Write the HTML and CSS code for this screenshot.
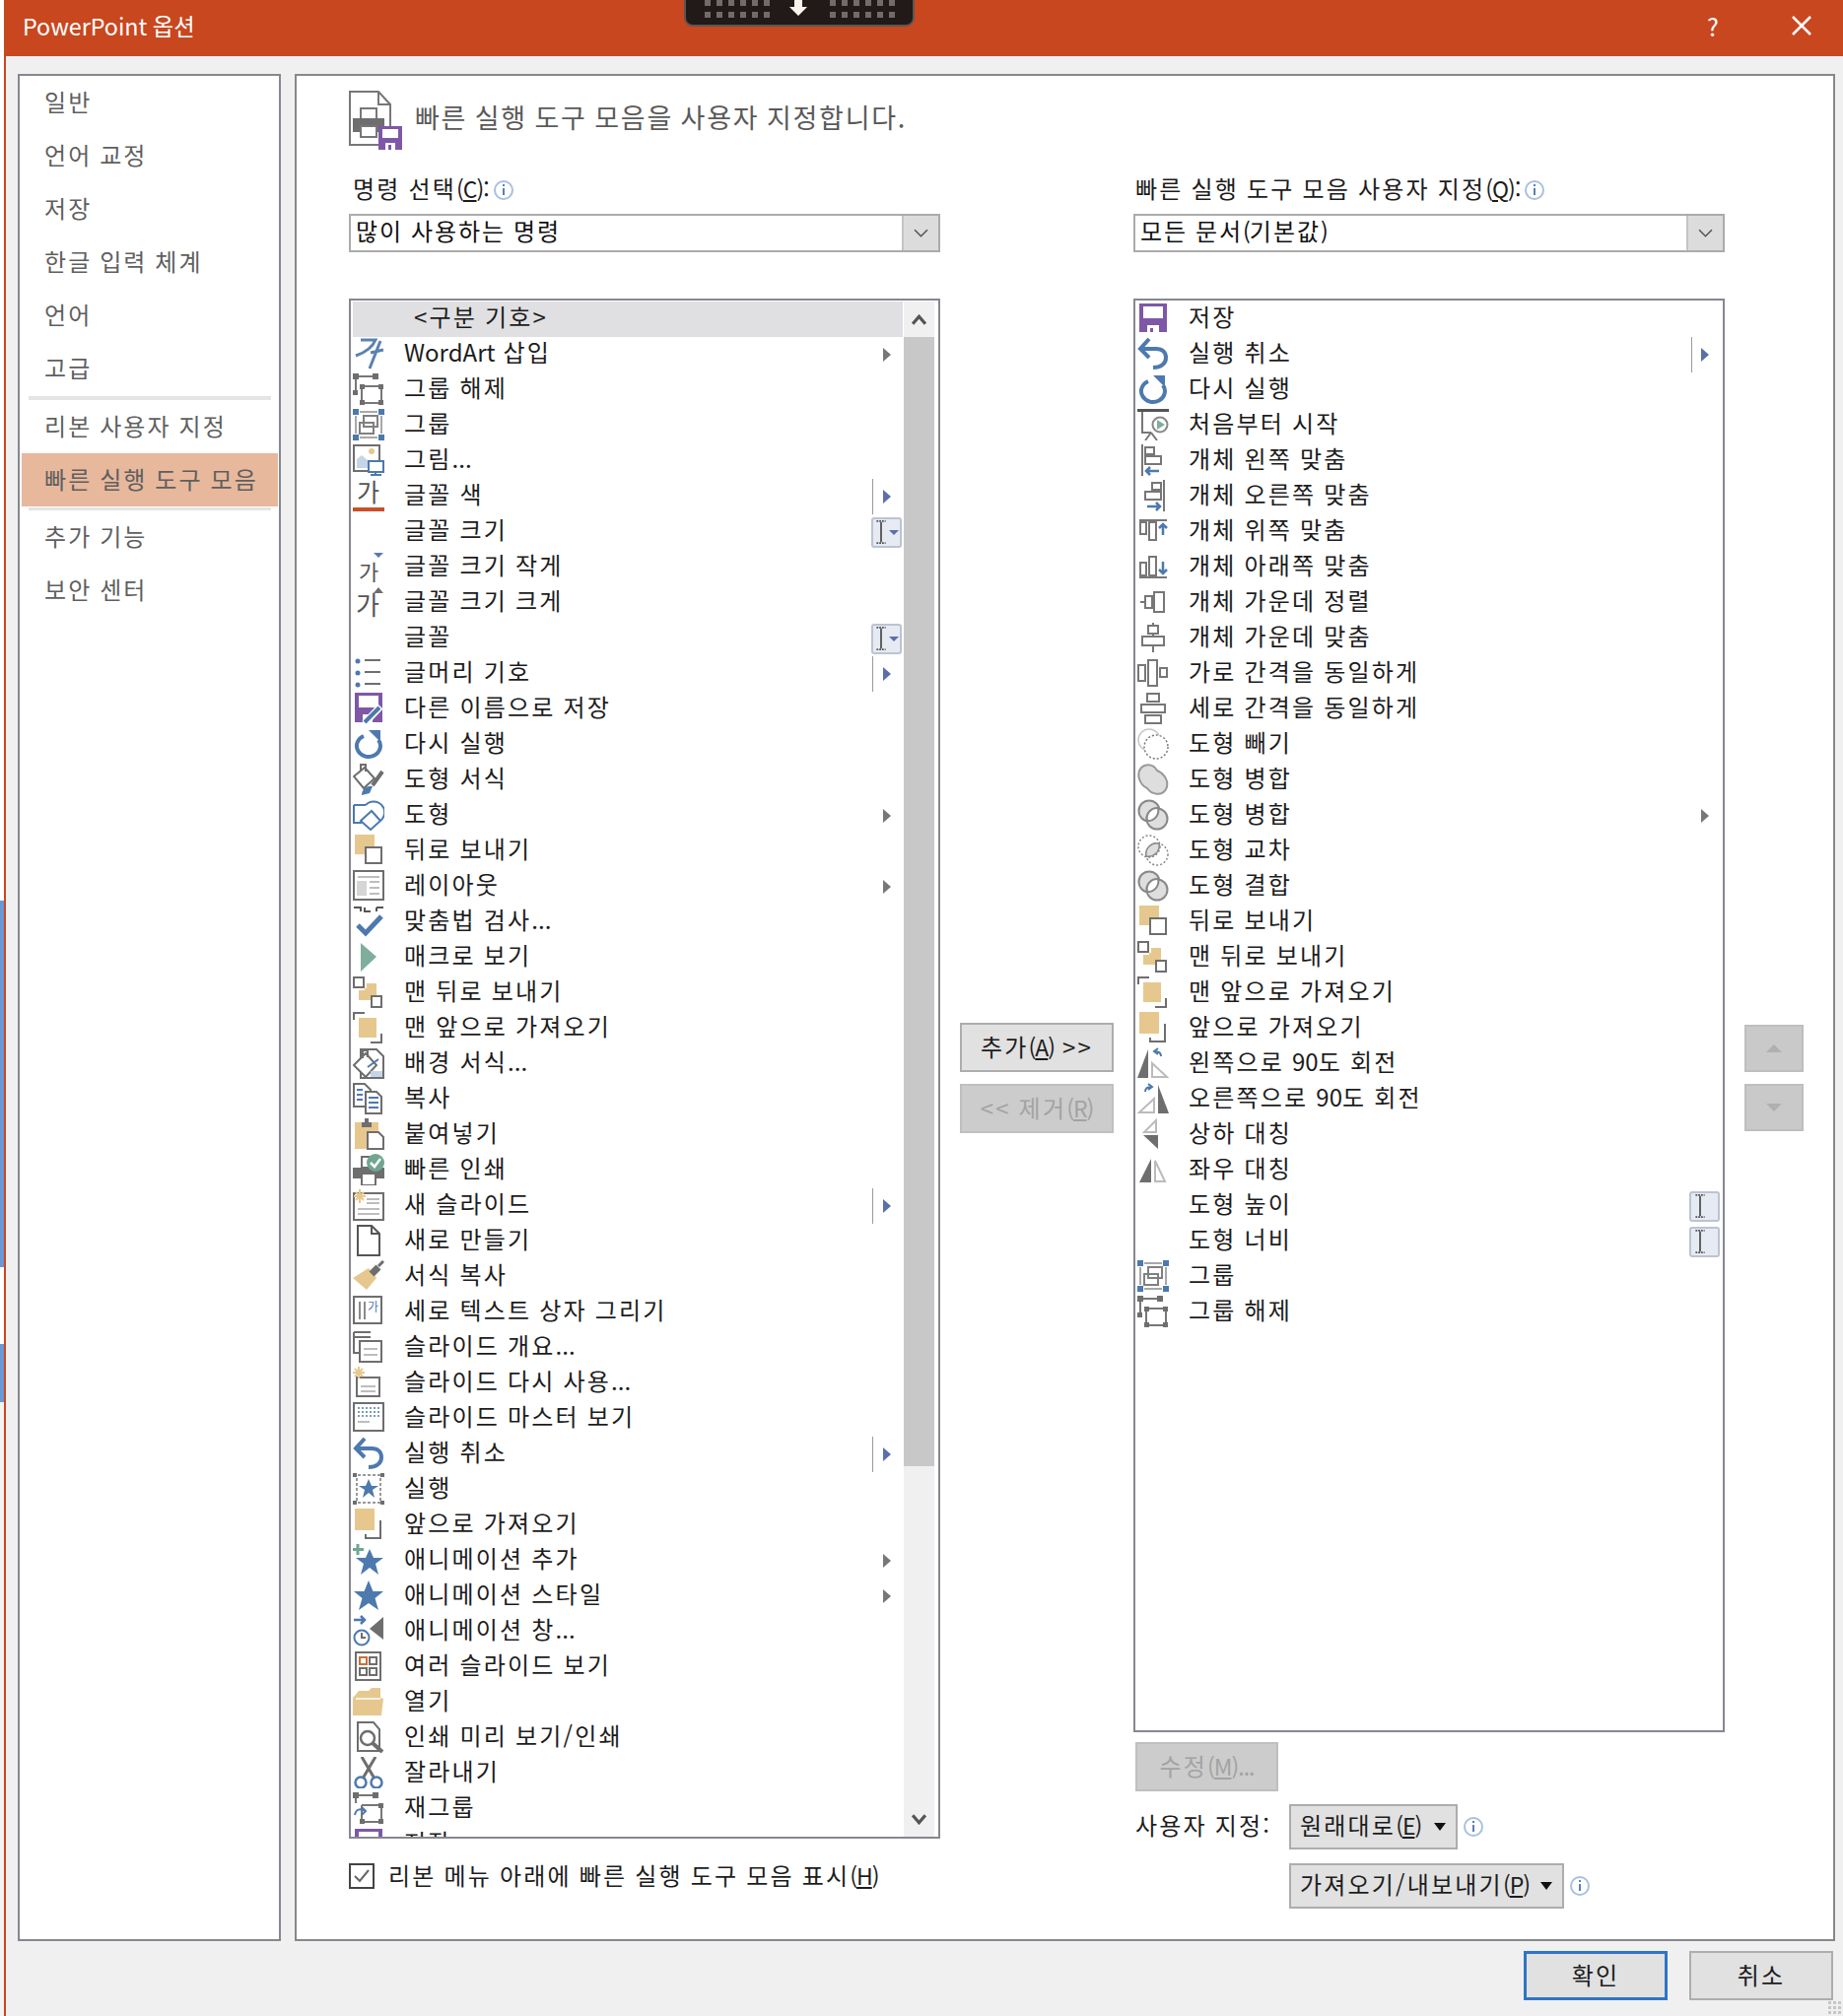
FILE: index.html
```html
<!DOCTYPE html>
<html lang="ko">
<head>
<meta charset="utf-8">
<title>PowerPoint 옵션</title>
<link rel="stylesheet" href="styles.css">
</head>
<body>
<svg class="sprite" xmlns="http://www.w3.org/2000/svg">
  <defs>
  <symbol id="save" viewBox="0 0 32 32"><path fill="#7e58a6" d="M2 1H30V30H2Z"/><path fill="#fff" d="M6 4H26V16H6ZM10 23H22V30H10Z"/><path fill="#7e58a6" d="M13 26H16V30H13Z"/></symbol>
  <symbol id="undo" viewBox="0 0 32 32"><path fill="none" stroke="#4d79ae" stroke-width="4" d="M6 11H19C26 11 29 15 29 20C29 26 24 30 16 30"/><path fill="none" stroke="#4d79ae" stroke-width="4" d="M12 1L3 11L12 20"/></symbol>
  <symbol id="redo" viewBox="0 0 32 32"><path fill="none" stroke="#4d79ae" stroke-width="4" d="M11 8A12 11 0 1 0 26 12"/><path fill="#4d79ae" d="M16 2H28V14Z"/></symbol>
  <symbol id="ungroup" viewBox="0 0 32 32"><g fill="none" stroke="#777" stroke-width="2"><path d="M3 3H23M3 3V20M9 13V30H29V13H9"/></g><g fill="#6e6e6e"><path d="M0 0H6V6H0ZM20 0H26V6H20ZM0 17H5V22H0ZM7 11H12V16H7ZM26 11H31V16H26ZM7 27H12V32H7ZM26 27H31V32H26Z"/></g></symbol>
  <symbol id="group" viewBox="0 0 32 32"><path fill="none" stroke="#a8a8a8" stroke-width="2" d="M7 3H25M7 29H25M3 7V25M29 7V25"/><g fill="none" stroke="#808080" stroke-width="2"><rect x="11" y="7" width="14" height="11"/><rect x="7" y="14" width="14" height="11"/></g><g fill="#4d79ae"><path d="M0 0H6V6H0ZM26 0H32V6H26ZM0 26H6V32H0ZM26 26H32V32H26Z"/></g></symbol>
  <symbol id="pic" viewBox="0 0 32 32"><rect x="1" y="1" width="26" height="26" fill="#fff" stroke="#6e6e6e" stroke-width="2"/><path d="M4 24V15L9 11L15 16V24Z" fill="#c5d5e8"/><circle cx="19" cy="7" r="3" fill="#e6c88e"/><rect x="16" y="17" width="15" height="11" fill="#fff" stroke="#4d79ae" stroke-width="2"/><path d="M18 31H29M23 28V31" stroke="#4d79ae" stroke-width="2"/></symbol>
  <symbol id="wordart" viewBox="0 0 32 32"><path fill="none" stroke="#5b82b0" stroke-width="3" d="M8 2H23C20 9 12 15 3 18M28 3L17 31M18 15L31 12"/></symbol>
  <symbol id="fcolor" viewBox="0 0 32 32"><text x="4" y="22" font-family="Noto Sans CJK KR" font-size="25" fill="#555">가</text><rect y="28" width="32" height="4" fill="#c8502a"/></symbol>
  <symbol id="fsmall" viewBox="0 0 32 32"><text x="6" y="30" font-family="Noto Sans CJK KR" font-size="22" fill="#555">가</text><path fill="#5a7ba8" d="M21 2H31L26 7Z"/></symbol>
  <symbol id="fbig" viewBox="0 0 32 32"><text x="3" y="29" font-family="Noto Sans CJK KR" font-size="26" fill="#555">가</text><path fill="#6e6e6e" d="M21 7H31L26 1Z"/></symbol>
  <symbol id="bullet" viewBox="0 0 32 32"><g fill="#4d79ae"><circle cx="5" cy="4" r="2.5"/><circle cx="5" cy="16" r="2.5"/><circle cx="5" cy="28" r="2.5"/></g><path stroke="#6e6e6e" stroke-width="2" d="M12 3H28M12 15H28M12 27H28"/></symbol>
  <symbol id="saveas" viewBox="0 0 32 32"><path fill="#7e58a6" d="M2 0H30V30H2Z"/><path fill="#fff" d="M6 3H26V15H6ZM10 22H20V30H10Z"/><path fill="none" stroke="#fff" stroke-width="7" d="M12 31L28 14"/><path fill="none" stroke="#4d79ae" stroke-width="4" d="M12 30L27 15"/></symbol>
  <symbol id="sformat" viewBox="0 0 32 32"><path fill="#fff" stroke="#6e6e6e" stroke-width="2" d="M1 13L12 4L22 15L11 25Z"/><path fill="none" stroke="#6e6e6e" stroke-width="2" d="M8 8V1H13V8"/><path stroke="#6e6e6e" stroke-width="4" d="M20 22L30 8"/><path fill="#4d79ae" d="M9 32C9 26 14 22 20 23L17 30Z"/></symbol>
  <symbol id="shapes" viewBox="0 0 32 32"><path fill="none" stroke="#4d79ae" stroke-width="2" d="M1 6H13M1 6V24H9M13 6A11 11 0 1 1 28 22"/><path fill="#fff" stroke="#4d79ae" stroke-width="2" d="M8 22L19 12L28 22L18 31Z"/></symbol>
  <symbol id="back" viewBox="0 0 32 32"><rect x="2" width="20" height="20" fill="#e6c88e"/><rect x="13" y="13" width="16" height="16" fill="#fff" stroke="#6e6e6e" stroke-width="2"/></symbol>
  <symbol id="layout" viewBox="0 0 32 32"><rect x="1" y="1" width="30" height="29" fill="#fff" stroke="#6e6e6e" stroke-width="2"/><path fill="#d5d5d5" d="M4 11H14V26H4Z"/><path stroke="#bdbdbd" stroke-width="2" d="M5 7H27M17 12H27M17 18H27M17 24H27"/></symbol>
  <symbol id="spell" viewBox="0 0 32 32"><path fill="none" stroke="#555" stroke-width="2" d="M1 2H8V6M12 2V6H18M24 2H31M24 2V6"/><path fill="none" stroke="#4d79ae" stroke-width="5" d="M5 20L13 28L29 11"/></symbol>
  <symbol id="macro" viewBox="0 0 32 32"><path fill="#7fae9c" d="M8 2L24 16L8 31Z"/></symbol>
  <symbol id="sendback" viewBox="0 0 32 32"><rect x="1" y="1" width="10" height="10" fill="#fff" stroke="#6e6e6e" stroke-width="2"/><path fill="#e6c88e" d="M14 7H24V18H14ZM6 14H14V24H6Z"/><path fill="#e6c88e" d="M12 12H24V24H12Z"/><rect x="19" y="20" width="10" height="11" fill="#fff" stroke="#6e6e6e" stroke-width="2"/></symbol>
  <symbol id="front" viewBox="0 0 32 32"><path fill="none" stroke="#6e6e6e" stroke-width="2" d="M1 8V1H12M29 22V31H18"/><rect x="6" y="6" width="18" height="20" fill="#e6c88e"/></symbol>
  <symbol id="tofront" viewBox="0 0 32 32"><rect x="2" width="20" height="22" fill="#e6c88e"/><path fill="none" stroke="#6e6e6e" stroke-width="2" d="M27 13H28V30H13V26"/></symbol>
  <symbol id="bgfmt" viewBox="0 0 32 32"><path fill="#fff" stroke="#6e6e6e" stroke-width="2" d="M8 2H24L31 9V31H8Z"/><path fill="#fff" stroke="#6e6e6e" stroke-width="2" d="M1 18L13 6L24 18L13 30Z"/><path fill="none" stroke="#6e6e6e" stroke-width="2" d="M10 11V3H15V10"/><path stroke="#4d79ae" stroke-width="2" d="M15 20L26 12"/><path fill="#c5d5e8" d="M18 24H30V30H18Z"/></symbol>
  <symbol id="copy" viewBox="0 0 32 32"><path fill="#fff" stroke="#6e6e6e" stroke-width="2" d="M1 1H12L18 7V24H1Z"/><path fill="#fff" stroke="#6e6e6e" stroke-width="2" d="M13 9H24L29 14V31H13Z"/><path stroke="#4d79ae" stroke-width="2" d="M4 7H10M4 12H10M4 17H10M16 15H26M16 20H26M16 25H26"/></symbol>
  <symbol id="paste" viewBox="0 0 32 32"><path fill="#e6c88e" d="M2 4H26V31H2Z"/><path fill="#6e6e6e" d="M9 4H19V9H9ZM12 0H16V4H12Z"/><path fill="#fff" stroke="#6e6e6e" stroke-width="2" d="M15 14H26L31 19V31H15Z"/></symbol>
  <symbol id="qprint" viewBox="0 0 32 32"><path fill="#fff" stroke="#6e6e6e" stroke-width="2" d="M9 3H18V14H9Z"/><path fill="#6e6e6e" d="M0 14H32V25H0Z"/><path fill="#fff" stroke="#6e6e6e" stroke-width="2" d="M9 20H23V32H9Z"/><circle cx="23" cy="9" r="9" fill="#6fa692"/><path fill="none" stroke="#fff" stroke-width="2.5" d="M18 9L22 13L28 5"/></symbol>
  <symbol id="nslide" viewBox="0 0 32 32"><rect x="1" y="4" width="30" height="27" fill="#fff" stroke="#6e6e6e" stroke-width="2"/><path stroke="#bdbdbd" stroke-width="2" d="M14 10H27M14 14H27M5 20H27M5 25H27"/><path stroke="#e6c88e" stroke-width="2" d="M7 0V14M1 7H13M3 3L11 11M11 3L3 11"/></symbol>
  <symbol id="new" viewBox="0 0 32 32"><path fill="#fff" stroke="#555" stroke-width="2" d="M5 1H19L27 9V31H5Z"/><path fill="none" stroke="#555" stroke-width="2" d="M19 1V9H27"/></symbol>
  <symbol id="painter" viewBox="0 0 32 32"><path fill="#e6c88e" d="M0 18L16 8L24 18L14 30Z"/><path stroke="#6e6e6e" stroke-width="7" d="M19 14L26 7"/><path stroke="#6e6e6e" stroke-width="3" d="M26 6L31 1"/></symbol>
  <symbol id="vtext" viewBox="0 0 32 32"><rect x="1" y="1" width="28" height="27" fill="#fff" stroke="#6e6e6e" stroke-width="2"/><path stroke="#8a8a8a" stroke-width="2" d="M7 6V24M12 6V24"/><text x="15" y="16" font-family="Noto Sans CJK KR" font-size="12" fill="#4d79ae">가</text></symbol>
  <symbol id="outl" viewBox="0 0 32 32"><path fill="none" stroke="#6e6e6e" stroke-width="2" d="M1 1H18M1 1V22H6M1 6H18"/><rect x="7" y="10" width="22" height="21" fill="#fff" stroke="#6e6e6e" stroke-width="2"/><path stroke="#bdbdbd" stroke-width="2" d="M11 18H25M11 24H25"/></symbol>
  <symbol id="reuse" viewBox="0 0 32 32"><rect x="4" y="11" width="23" height="19" fill="#fff" stroke="#6e6e6e" stroke-width="2"/><path stroke="#bdbdbd" stroke-width="2" d="M8 20H23M8 25H23"/><path stroke="#e6c88e" stroke-width="2" d="M6 0V12M0 6H12M2 2L10 10M10 2L2 10"/></symbol>
  <symbol id="master" viewBox="0 0 32 32"><rect x="1" y="1" width="30" height="28" fill="#fff" stroke="#6e6e6e" stroke-width="2"/><path stroke="#7d9bc0" stroke-width="2" stroke-dasharray="2 2" d="M5 6H27M5 10H27M5 14H27"/><path stroke="#bdbdbd" stroke-width="2" d="M5 20H17"/></symbol>
  <symbol id="run" viewBox="0 0 32 32"><path stroke="#999" stroke-width="2" stroke-dasharray="3 2" d="M5 2H28M5 30H28M4 5V28M28 5V28"/><path fill="#6e6e6e" d="M0 0H4V4H0ZM28 0H32V4H28ZM0 28H4V32H0ZM28 28H32V32H28Z"/><path fill="#4d79ae" d="M16 6L19 13H26L20 17L22 25L16 20L10 25L12 17L6 13H13Z"/></symbol>
  <symbol id="addstar" viewBox="0 0 32 32"><path fill="#4d79ae" d="M17 5L21 14H31L23 20L26 31L17 24L8 31L11 20L3 14H13Z"/><path stroke="#6fa692" stroke-width="3" d="M5 0V11M0 5.500H11"/></symbol>
  <symbol id="star" viewBox="0 0 32 32"><path fill="#4d79ae" d="M16 1L20.500 12H31L22.500 19L26 31L16 24L6 31L9.500 19L1 12H11.500Z"/></symbol>
  <symbol id="apane" viewBox="0 0 32 32"><path fill="#6e6e6e" d="M31 2V25L17 14Z"/><path fill="none" stroke="#4d79ae" stroke-width="2.500" d="M1 5H12M8 1L12 5L8 9"/><circle cx="9" cy="23" r="7.500" fill="#fff" stroke="#4d79ae" stroke-width="2"/><path fill="none" stroke="#6e6e6e" stroke-width="2" d="M9 18V23H13"/></symbol>
  <symbol id="sorter" viewBox="0 0 32 32"><rect x="3" y="2" width="25" height="28" fill="#fff" stroke="#6e6e6e" stroke-width="2"/><g fill="none" stroke-width="2"><rect x="7" y="7" width="7" height="7" stroke="#c8703a"/><rect x="17" y="7" width="7" height="7" stroke="#6e6e6e"/><rect x="7" y="18" width="7" height="7" stroke="#6e6e6e"/><rect x="17" y="18" width="7" height="7" stroke="#6e6e6e"/></g></symbol>
  <symbol id="open" viewBox="0 0 32 32"><path fill="#e6c88e" d="M0 12L6 5H16L19 2H28V12L31 13L29 30H0Z"/><path fill="none" stroke="#fff" stroke-width="1.500" d="M3 13H28"/></symbol>
  <symbol id="preview" viewBox="0 0 32 32"><path fill="#fff" stroke="#6e6e6e" stroke-width="2" d="M5 1H21L27 8V30H5Z"/><circle cx="15" cy="17" r="7" fill="#fff" stroke="#6e6e6e" stroke-width="2.500"/><path stroke="#6e6e6e" stroke-width="4" d="M20 22L30 31"/></symbol>
  <symbol id="cut" viewBox="0 0 32 32"><path stroke="#6e6e6e" stroke-width="3" d="M9 0L22 22M23 0L10 22"/><g fill="none" stroke="#4d79ae" stroke-width="2.500"><circle cx="8" cy="26" r="5.500"/><circle cx="24" cy="26" r="5.500"/></g></symbol>
  <symbol id="regroup" viewBox="0 0 32 32"><g fill="none" stroke="#777" stroke-width="2"><path d="M3 3H23M3 3V11M9 13V30H29V13H9"/></g><path fill="#6e6e6e" d="M0 0H6V6H0ZM20 0H26V6H20ZM7 27H12V32H7ZM26 27H31V32H26ZM26 11H31V16H26Z"/><path fill="none" stroke="#4d79ae" stroke-width="2" d="M2 23C3 17 8 16 12 19M9 15L13 19L9 23"/></symbol>
  <symbol id="start" viewBox="0 0 32 32"><path stroke="#555" stroke-width="3" d="M0 1.500H32"/><path fill="none" stroke="#777" stroke-width="2" d="M5 3V24H14M14 24L8 32M14 24L20 32"/><circle cx="23" cy="16" r="7.500" fill="#fff" stroke="#888" stroke-width="2"/><path fill="#7fae9c" d="M20 11L28 16L20 21Z"/></symbol>
  <symbol id="alignl" viewBox="0 0 32 32"><path stroke="#777" stroke-width="2" d="M5 0V32"/><g fill="none" stroke="#777" stroke-width="2"><rect x="8" y="3" width="9" height="7"/><rect x="8" y="12" width="16" height="8"/></g><path fill="none" stroke="#4d79ae" stroke-width="2.500" d="M22 27H9M13 23L9 27L13 31"/></symbol>
  <symbol id="alignr" viewBox="0 0 32 32"><path stroke="#777" stroke-width="2" d="M27 0V32"/><g fill="none" stroke="#777" stroke-width="2"><rect x="15" y="3" width="9" height="7"/><rect x="8" y="12" width="16" height="8"/></g><path fill="none" stroke="#4d79ae" stroke-width="2.500" d="M10 27H23M19 23L23 27L19 31"/></symbol>
  <symbol id="alignt" viewBox="0 0 32 32"><path stroke="#777" stroke-width="2" d="M2 5H30"/><g fill="none" stroke="#777" stroke-width="2"><rect x="3" y="7" width="6" height="12"/><rect x="12" y="7" width="7" height="18"/></g><path fill="none" stroke="#4d79ae" stroke-width="2.500" d="M26 20V9M22 13L26 9L30 13"/></symbol>
  <symbol id="alignb" viewBox="0 0 32 32"><path stroke="#777" stroke-width="2" d="M2 27H30"/><g fill="none" stroke="#777" stroke-width="2"><rect x="3" y="12" width="6" height="13"/><rect x="12" y="6" width="7" height="19"/></g><path fill="none" stroke="#4d79ae" stroke-width="2.500" d="M26 11V23M22 19L26 23L30 19"/></symbol>
  <symbol id="alignc" viewBox="0 0 32 32"><path stroke="#777" stroke-width="2" d="M3 16H28"/><g fill="#fff" stroke="#777" stroke-width="2"><rect x="8" y="10" width="7" height="12"/><rect x="17" y="6" width="10" height="20"/></g></symbol>
  <symbol id="alignm" viewBox="0 0 32 32"><path stroke="#777" stroke-width="2" d="M16 1V31"/><g fill="#fff" stroke="#777" stroke-width="2"><rect x="11" y="4" width="10" height="8"/><rect x="5" y="15" width="22" height="9"/></g></symbol>
  <symbol id="disth" viewBox="0 0 32 32"><g fill="#fff" stroke="#777" stroke-width="2"><rect x="1" y="8" width="7" height="16"/><rect x="11" y="3" width="9" height="26"/><rect x="23" y="11" width="7" height="9"/></g></symbol>
  <symbol id="distv" viewBox="0 0 32 32"><g fill="#fff" stroke="#777" stroke-width="2"><rect x="10" y="1" width="12" height="8"/><rect x="4" y="12" width="24" height="8"/><rect x="8" y="23" width="16" height="8"/></g></symbol>
  <symbol id="csub" viewBox="0 0 32 32"><circle cx="12" cy="12" r="11" fill="none" stroke="#c8c8c8" stroke-width="1.500"/><circle cx="19" cy="19" r="12" fill="#fff" stroke="#777" stroke-width="1.500" stroke-dasharray="2 2"/></symbol>
  <symbol id="cuni" viewBox="0 0 32 32"><path fill="#dedede" stroke="#999" stroke-width="2" d="M4 4C9 -1 17 1 20 7C27 10 33 18 29 26C25 33 15 32 10 25C3 22 -2 11 4 4Z"/></symbol>
  <symbol id="cmerge" viewBox="0 0 32 32"><g fill="#dedede" stroke="#888" stroke-width="2"><circle cx="12" cy="12" r="10.500"/><circle cx="20" cy="20" r="10.500"/></g><path fill="#fff" stroke="#888" stroke-width="2" d="M21 9A10.500 10.500 0 0 0 10 22A10.500 10.500 0 0 0 21 9Z"/></symbol>
  <symbol id="cint" viewBox="0 0 32 32"><g fill="none" stroke="#888" stroke-width="1.500" stroke-dasharray="2 2"><circle cx="12" cy="12" r="11"/><circle cx="20" cy="20" r="11"/></g><path fill="#dedede" stroke="#888" stroke-width="1.500" d="M22 9A11 11 0 0 0 9 22A11 11 0 0 0 22 9Z"/></symbol>
  <symbol id="rotl" viewBox="0 0 32 32"><path fill="#6e6e6e" d="M0 31L11 2V31Z"/><path fill="#fff" stroke="#bbb" stroke-width="2" d="M15 16L30 30H15Z"/><path fill="none" stroke="#4d79ae" stroke-width="2" d="M24 9C24 5 21 4 18 4M21 1L17 4L21 7"/></symbol>
  <symbol id="rotr" viewBox="0 0 32 32"><path fill="#6e6e6e" d="M32 31L21 2V31Z"/><path fill="#fff" stroke="#bbb" stroke-width="2" d="M17 16L2 30H17Z"/><path fill="none" stroke="#4d79ae" stroke-width="2" d="M8 9C8 5 11 4 14 4M11 1L15 4L11 7"/></symbol>
  <symbol id="flipv" viewBox="0 0 32 32"><path fill="#fff" stroke="#bbb" stroke-width="2" d="M19 2V14H7Z"/><path fill="#6e6e6e" d="M6 17H21V31Z"/></symbol>
  <symbol id="fliph" viewBox="0 0 32 32"><path fill="#6e6e6e" d="M2 29L14 5V29Z"/><path fill="#fff" stroke="#bbb" stroke-width="2" d="M18 7L28 28H18Z"/></symbol>
  <symbol id="ibeam" viewBox="0 0 12 26"><path fill="none" stroke="#555" stroke-width="2" stroke-dasharray="2 1" d="M1 1H11M1 25H11"/><path stroke="#555" stroke-width="2" d="M6 2V24"/></symbol>
  <symbol id="info" viewBox="0 0 22 22"><circle cx="11" cy="11" r="9" fill="#fff" stroke="#a9c0e0" stroke-width="2"/><path stroke="#5a7fb5" stroke-width="2" d="M11 9V16M11 5V7"/></symbol>
  </defs>
</svg>

<div class="strip">
  <i class="strip-a"></i><i class="strip-b"></i><i class="strip-a2"></i><i class="strip-b2"></i><i class="strip-c"></i>
</div>

<div class="dialog">
  <header class="title">
    <span class="title-text">PowerPoint 옵션</span>
    <div class="remote">
      <div class="dots"><i></i><i></i><i></i><i></i><i></i><i></i><i></i><i></i><i></i><i></i><i></i><i></i></div>
      <svg class="remote-arrow" viewBox="0 0 18 16"><path fill="#fdf3ee" d="M5 0H13V7H18L9 16L0 7H5Z"/></svg>
      <div class="dots"><i></i><i></i><i></i><i></i><i></i><i></i><i></i><i></i><i></i><i></i><i></i><i></i></div>
    </div>
    <span class="help">?</span>
    <svg class="close" viewBox="0 0 20 20"><path stroke="#fff" stroke-width="2.500" d="M1 1L19 19M19 1L1 19"/></svg>
  </header>

  <div class="content">
    <nav class="side">
      <a class="nav">일반</a>
      <a class="nav">언어 교정</a>
      <a class="nav">저장</a>
      <a class="nav">한글 입력 체계</a>
      <a class="nav">언어</a>
      <a class="nav">고급</a>
      <hr class="nav-sep">
      <a class="nav">리본 사용자 지정</a>
      <a class="nav nav-on">빠른 실행 도구 모음</a>
      <hr class="nav-sep nav-sep-b">
      <a class="nav">추가 기능</a>
      <a class="nav">보안 센터</a>
    </nav>

    <main class="main">
      <div class="head">
        <svg class="head-ic" viewBox="0 0 54 60">
          <path fill="#fff" stroke="#777" stroke-width="2" d="M1 1H30L42 14V55H1Z"/><path fill="none" stroke="#777" stroke-width="2" d="M30 1V14H42"/>
          <path fill="#fff" stroke="#777" stroke-width="2" d="M12 18H28V30H12Z"/><path fill="#6e6e6e" d="M4 28H36V42H4Z"/><path fill="#fff" stroke="#777" stroke-width="2" d="M12 36H28V47H12Z"/>
          <path fill="#7e58a6" d="M30 36H54V60H30Z"/><path fill="#fff" d="M34 39H50V48H34ZM37 53H47V60H37Z"/><path fill="#7e58a6" d="M40 55H43V60H40Z"/>
        </svg>
        <h1 class="head-text">빠른 실행 도구 모음을 사용자 지정합니다.</h1>
      </div>

      <div class="cols">
        <section class="col">
          <label class="lab"><span class="lab-text">명령 선택<span class="mn">(<u>C</u>):</span></span><svg class="info"><use href="#info"/></svg></label>
          <div class="combo"><span class="combo-text">많이 사용하는 명령</span><span class="combo-btn"><svg class="chev" viewBox="0 0 14 8"><path fill="none" stroke="#555" stroke-width="1.500" d="M1 1L7 7L13 1"/></svg></span></div>
          <div class="list list-left">
            <ul class="rows">
              <li class="row row-on"><span class="ic"></span><span class="lbl sep-lbl">&lt;구분 기호&gt;</span></li>
              <li class="row"><svg class="ic"><use href="#wordart"/></svg><span class="lbl"><span class="lat">WordArt</span> 삽입</span><span class="tail"><i class="tri"></i></span></li>
              <li class="row"><svg class="ic"><use href="#ungroup"/></svg><span class="lbl">그룹 해제</span></li>
              <li class="row"><svg class="ic"><use href="#group"/></svg><span class="lbl">그룹</span></li>
              <li class="row"><svg class="ic"><use href="#pic"/></svg><span class="lbl">그림<span class="lat">...</span></span></li>
              <li class="row"><svg class="ic"><use href="#fcolor"/></svg><span class="lbl">글꼴 색</span><span class="tail split"><i class="tri tri-b"></i></span></li>
              <li class="row"><span class="ic"></span><span class="lbl">글꼴 크기</span><span class="tail"><span class="ibox"><svg class="ibeam"><use href="#ibeam"/></svg><i class="mini"></i></span></span></li>
              <li class="row"><svg class="ic"><use href="#fsmall"/></svg><span class="lbl">글꼴 크기 작게</span></li>
              <li class="row"><svg class="ic"><use href="#fbig"/></svg><span class="lbl">글꼴 크기 크게</span></li>
              <li class="row"><span class="ic"></span><span class="lbl">글꼴</span><span class="tail"><span class="ibox"><svg class="ibeam"><use href="#ibeam"/></svg><i class="mini"></i></span></span></li>
              <li class="row"><svg class="ic"><use href="#bullet"/></svg><span class="lbl">글머리 기호</span><span class="tail split"><i class="tri tri-b"></i></span></li>
              <li class="row"><svg class="ic"><use href="#saveas"/></svg><span class="lbl">다른 이름으로 저장</span></li>
              <li class="row"><svg class="ic"><use href="#redo"/></svg><span class="lbl">다시 실행</span></li>
              <li class="row"><svg class="ic"><use href="#sformat"/></svg><span class="lbl">도형 서식</span></li>
              <li class="row"><svg class="ic"><use href="#shapes"/></svg><span class="lbl">도형</span><span class="tail"><i class="tri"></i></span></li>
              <li class="row"><svg class="ic"><use href="#back"/></svg><span class="lbl">뒤로 보내기</span></li>
              <li class="row"><svg class="ic"><use href="#layout"/></svg><span class="lbl">레이아웃</span><span class="tail"><i class="tri"></i></span></li>
              <li class="row"><svg class="ic"><use href="#spell"/></svg><span class="lbl">맞춤법 검사<span class="lat">...</span></span></li>
              <li class="row"><svg class="ic"><use href="#macro"/></svg><span class="lbl">매크로 보기</span></li>
              <li class="row"><svg class="ic"><use href="#sendback"/></svg><span class="lbl">맨 뒤로 보내기</span></li>
              <li class="row"><svg class="ic"><use href="#front"/></svg><span class="lbl">맨 앞으로 가져오기</span></li>
              <li class="row"><svg class="ic"><use href="#bgfmt"/></svg><span class="lbl">배경 서식<span class="lat">...</span></span></li>
              <li class="row"><svg class="ic"><use href="#copy"/></svg><span class="lbl">복사</span></li>
              <li class="row"><svg class="ic"><use href="#paste"/></svg><span class="lbl">붙여넣기</span></li>
              <li class="row"><svg class="ic"><use href="#qprint"/></svg><span class="lbl">빠른 인쇄</span></li>
              <li class="row"><svg class="ic"><use href="#nslide"/></svg><span class="lbl">새 슬라이드</span><span class="tail split"><i class="tri tri-b"></i></span></li>
              <li class="row"><svg class="ic"><use href="#new"/></svg><span class="lbl">새로 만들기</span></li>
              <li class="row"><svg class="ic"><use href="#painter"/></svg><span class="lbl">서식 복사</span></li>
              <li class="row"><svg class="ic"><use href="#vtext"/></svg><span class="lbl">세로 텍스트 상자 그리기</span></li>
              <li class="row"><svg class="ic"><use href="#outl"/></svg><span class="lbl">슬라이드 개요<span class="lat">...</span></span></li>
              <li class="row"><svg class="ic"><use href="#reuse"/></svg><span class="lbl">슬라이드 다시 사용<span class="lat">...</span></span></li>
              <li class="row"><svg class="ic"><use href="#master"/></svg><span class="lbl">슬라이드 마스터 보기</span></li>
              <li class="row"><svg class="ic"><use href="#undo"/></svg><span class="lbl">실행 취소</span><span class="tail split"><i class="tri tri-b"></i></span></li>
              <li class="row"><svg class="ic"><use href="#run"/></svg><span class="lbl">실행</span></li>
              <li class="row"><svg class="ic"><use href="#tofront"/></svg><span class="lbl">앞으로 가져오기</span></li>
              <li class="row"><svg class="ic"><use href="#addstar"/></svg><span class="lbl">애니메이션 추가</span><span class="tail"><i class="tri"></i></span></li>
              <li class="row"><svg class="ic"><use href="#star"/></svg><span class="lbl">애니메이션 스타일</span><span class="tail"><i class="tri"></i></span></li>
              <li class="row"><svg class="ic"><use href="#apane"/></svg><span class="lbl">애니메이션 창<span class="lat">...</span></span></li>
              <li class="row"><svg class="ic"><use href="#sorter"/></svg><span class="lbl">여러 슬라이드 보기</span></li>
              <li class="row"><svg class="ic"><use href="#open"/></svg><span class="lbl">열기</span></li>
              <li class="row"><svg class="ic"><use href="#preview"/></svg><span class="lbl">인쇄 미리 보기/인쇄</span></li>
              <li class="row"><svg class="ic"><use href="#cut"/></svg><span class="lbl">잘라내기</span></li>
              <li class="row"><svg class="ic"><use href="#regroup"/></svg><span class="lbl">재그룹</span></li>
              <li class="row"><svg class="ic"><use href="#save"/></svg><span class="lbl">저장</span></li>
            </ul>
            <div class="sb">
              <span class="sb-btn"><svg class="sb-chev" viewBox="0 0 14 10"><path fill="none" stroke="#555" stroke-width="3" d="M1 9L7 2L13 9"/></svg></span>
              <span class="sb-thumb"></span>
              <span class="sb-track"></span>
              <span class="sb-btn"><svg class="sb-chev" viewBox="0 0 14 10"><path fill="none" stroke="#555" stroke-width="3" d="M1 1L7 8L13 1"/></svg></span>
            </div>
          </div>
          <div class="check-row"><span class="check"><svg class="check-mark" viewBox="0 0 18 16"><path fill="none" stroke="#666" stroke-width="2" d="M2 8L7 13L16 2"/></svg></span><span class="check-text">리본 메뉴 아래에 빠른 실행 도구 모음 표시<span class="mn">(<u>H</u>)</span></span></div>
        </section>

        <section class="col col-mid">
          <button class="btn">추가<span class="mn">(<u>A</u>)</span> &gt;&gt;</button>
          <button class="btn btn-off">&lt;&lt; 제거<span class="mn">(<u>R</u>)</span></button>
        </section>

        <section class="col">
          <label class="lab lab-r"><span class="lab-text">빠른 실행 도구 모음 사용자 지정<span class="mn">(<u>Q</u>):</span></span><svg class="info"><use href="#info"/></svg></label>
          <div class="combo"><span class="combo-text">모든 문서<span class="mn">(</span>기본값<span class="mn">)</span></span><span class="combo-btn"><svg class="chev" viewBox="0 0 14 8"><path fill="none" stroke="#555" stroke-width="1.500" d="M1 1L7 7L13 1"/></svg></span></div>
          <div class="list list-right">
            <ul class="rows">
              <li class="row"><svg class="ic"><use href="#save"/></svg><span class="lbl">저장</span></li>
              <li class="row"><svg class="ic"><use href="#undo"/></svg><span class="lbl">실행 취소</span><span class="tail split"><i class="tri tri-b"></i></span></li>
              <li class="row"><svg class="ic"><use href="#redo"/></svg><span class="lbl">다시 실행</span></li>
              <li class="row"><svg class="ic"><use href="#start"/></svg><span class="lbl">처음부터 시작</span></li>
              <li class="row"><svg class="ic"><use href="#alignl"/></svg><span class="lbl">개체 왼쪽 맞춤</span></li>
              <li class="row"><svg class="ic"><use href="#alignr"/></svg><span class="lbl">개체 오른쪽 맞춤</span></li>
              <li class="row"><svg class="ic"><use href="#alignt"/></svg><span class="lbl">개체 위쪽 맞춤</span></li>
              <li class="row"><svg class="ic"><use href="#alignb"/></svg><span class="lbl">개체 아래쪽 맞춤</span></li>
              <li class="row"><svg class="ic"><use href="#alignc"/></svg><span class="lbl">개체 가운데 정렬</span></li>
              <li class="row"><svg class="ic"><use href="#alignm"/></svg><span class="lbl">개체 가운데 맞춤</span></li>
              <li class="row"><svg class="ic"><use href="#disth"/></svg><span class="lbl">가로 간격을 동일하게</span></li>
              <li class="row"><svg class="ic"><use href="#distv"/></svg><span class="lbl">세로 간격을 동일하게</span></li>
              <li class="row"><svg class="ic"><use href="#csub"/></svg><span class="lbl">도형 빼기</span></li>
              <li class="row"><svg class="ic"><use href="#cuni"/></svg><span class="lbl">도형 병합</span></li>
              <li class="row"><svg class="ic"><use href="#cmerge"/></svg><span class="lbl">도형 병합</span><span class="tail"><i class="tri"></i></span></li>
              <li class="row"><svg class="ic"><use href="#cint"/></svg><span class="lbl">도형 교차</span></li>
              <li class="row"><svg class="ic"><use href="#cmerge"/></svg><span class="lbl">도형 결합</span></li>
              <li class="row"><svg class="ic"><use href="#back"/></svg><span class="lbl">뒤로 보내기</span></li>
              <li class="row"><svg class="ic"><use href="#sendback"/></svg><span class="lbl">맨 뒤로 보내기</span></li>
              <li class="row"><svg class="ic"><use href="#front"/></svg><span class="lbl">맨 앞으로 가져오기</span></li>
              <li class="row"><svg class="ic"><use href="#tofront"/></svg><span class="lbl">앞으로 가져오기</span></li>
              <li class="row"><svg class="ic"><use href="#rotl"/></svg><span class="lbl">왼쪽으로 <span class="lat">90</span>도 회전</span></li>
              <li class="row"><svg class="ic"><use href="#rotr"/></svg><span class="lbl">오른쪽으로 <span class="lat">90</span>도 회전</span></li>
              <li class="row"><svg class="ic"><use href="#flipv"/></svg><span class="lbl">상하 대칭</span></li>
              <li class="row"><svg class="ic"><use href="#fliph"/></svg><span class="lbl">좌우 대칭</span></li>
              <li class="row"><span class="ic"></span><span class="lbl">도형 높이</span><span class="tail"><span class="ibox ibox-s"><svg class="ibeam"><use href="#ibeam"/></svg></span></span></li>
              <li class="row"><span class="ic"></span><span class="lbl">도형 너비</span><span class="tail"><span class="ibox ibox-s"><svg class="ibeam"><use href="#ibeam"/></svg></span></span></li>
              <li class="row"><svg class="ic"><use href="#group"/></svg><span class="lbl">그룹</span></li>
              <li class="row"><svg class="ic"><use href="#ungroup"/></svg><span class="lbl">그룹 해제</span></li>
            </ul>
          </div>
          <button class="btn btn-off btn-mod">수정<span class="mn">(<u>M</u>)...</span></button>
          <div class="custom">
            <span class="custom-lab">사용자 지정:</span>
            <div class="custom-cell"><button class="btn drop drop-a"><span class="drop-text">원래대로<span class="mn">(<u>E</u>)</span></span><i class="caret"></i></button><svg class="info"><use href="#info"/></svg></div>
            <span></span>
            <div class="custom-cell"><button class="btn drop drop-b"><span class="drop-text">가져오기/내보내기<span class="mn">(<u>P</u>)</span></span><i class="caret"></i></button><svg class="info"><use href="#info"/></svg></div>
          </div>
        </section>

        <section class="col col-move">
          <span class="move"><i class="move-up"></i></span>
          <span class="move"><i class="move-down"></i></span>
        </section>
      </div>
    </main>
  </div>

  <footer class="foot">
    <button class="btn btn-foot btn-ok">확인</button>
    <button class="btn btn-foot">취소</button>
    <span class="grip"></span>
  </footer>
</div>
</body>
</html>
```
FILE: styles.css
```css
* { box-sizing: border-box; }
html, body { margin: 0; padding: 0; }
body {
  width: 1870px;
  height: 2046px;
  overflow: hidden;
  display: flex;
  background: #fff;
  font-family: "Noto Sans CJK KR", "Noto Sans", sans-serif;
  font-size: 24px;
  letter-spacing: 2.2px;
  word-spacing: -1px;
  color: #1c1c1c;
}
.sprite { display: none; }

/* strip of the window behind the dialog */
.strip { width: 4px; flex: none; display: flex; flex-direction: column; }
.strip i { display: block; }
.strip-a { height: 914px; background: #fff; }
.strip-b { height: 372px; background: #6a98d2; }
.strip-a2 { height: 78px; background: #fff; }
.strip-b2 { height: 59px; background: #6a98d2; }
.strip-c { flex: 1; background: #f4f4f4; }

.dialog {
  flex: 1;
  display: flex;
  flex-direction: column;
  background: #f0f0f0;
  border-left: 2px solid #c8471f;
  min-width: 0;
}

/* title bar */
.title {
  height: 57px;
  flex: none;
  margin-left: -2px;
  background: #c8471f;
  color: #fff;
  display: flex;
  align-items: center;
  padding: 0 32px 6px 19px;
  position: relative;
}
.title-text { font-size: 23.300px; letter-spacing: 0; }
.help { margin-left: auto; margin-right: 74px; font-size: 25px; letter-spacing: 0; }
.close { width: 20px; height: 20px; }
.remote {
  position: absolute;
  left: 690px;
  top: 0;
  width: 234px;
  height: 27px;
  background: #211a19;
  border: 2px solid #5c5553;
  border-top: 0;
  border-radius: 0 0 9px 9px;
  display: flex;
  align-items: flex-start;
  padding-left: 19px;
}
.dots { display: grid; grid-template-columns: repeat(6, 6px); grid-auto-rows: 6px; gap: 6px; width: 66px; }
.dots i { background: #716b69; }
.remote-arrow { width: 18px; height: 16px; margin: 0 23px 0 20px; }

/* two panels */
.content {
  flex: 1;
  min-height: 0;
  display: flex;
  gap: 14px;
  padding: 18px 8px 0 12px;
}
.side {
  width: 267px;
  flex: none;
  background: #fff;
  border: 2px solid #85888e;
  padding: 0 1px 0 2px;
  color: #5f5f5f;
  letter-spacing: 2.1px;
}
.nav { display: flex; align-items: center; height: 54px; padding: 0 0 3px 23px; }
.nav-on { background: #e8b89c; margin-top: 0; }
.nav-sep { height: 4px; margin: 1px 7px 0; border: 0; background: #e4e4e6; }
.nav-sep-b { margin-top: 1px; height: 3px; }

.main {
  flex: 1;
  background: #fff;
  border: 2px solid #85888e;
  padding: 15px 0 0 53px;
  min-width: 0;
}
.head { display: flex; align-items: center; gap: 13px; height: 60px; }
.head-ic { width: 54px; height: 60px; flex: none; }
.head-text { margin: 0 0 8px; font-size: 27px; font-weight: 400; letter-spacing: 1.75px; word-spacing: -1.75px; color: #5a5a5a; }

.cols {
  display: grid;
  grid-template-columns: 600px 156px 600px 60px;
  column-gap: 20px;
  margin-top: 26px;
}
.col { display: flex; flex-direction: column; align-items: stretch; }
.col-mid { margin-top: 860px; gap: 12px; }
.col-move { margin-top: 862px; gap: 12px; }

.lab { height: 30px; display: flex; align-items: center; padding-left: 4px; white-space: pre; }
.lab-r { padding-left: 2px; }
.lab-text { margin-bottom: 5px; }
.mn { font-size: 23px; letter-spacing: -1px; }
.info { width: 22px; height: 22px; flex: none; }
.lab .info { margin: 0 0 1px 4px; }

.combo {
  height: 39px;
  margin-top: 9px;
  border: 2px solid #ababab;
  display: flex;
  align-items: center;
  justify-content: space-between;
}
.combo-text { padding-left: 5px; margin-bottom: 5px; line-height: 28px; color: #111; letter-spacing: 2px; }
.combo-btn {
  width: 37px;
  height: 100%;
  background: #dcdcdc;
  border-left: 2px solid #c4c4c4;
  display: flex;
  align-items: center;
  justify-content: center;
}
.chev { width: 15px; height: 9px; }

.list {
  margin-top: 47px;
  border: 2px solid #85888e;
  display: flex;
  overflow: hidden;
}
.list-left { height: 1563px; padding: 1px 0 0 2px; }
.list-right { height: 1455px; padding: 1px 2px 0 2px; }
.rows { flex: 1; min-width: 0; margin: 0; padding: 0; list-style: none; overflow: hidden; }
.row { display: flex; align-items: center; height: 36px; white-space: nowrap; padding-bottom: 2px; }
.row-on { background: #e0e0e2; }
.ic { width: 32px; height: 32px; flex: none; display: block; }
.lbl { margin: 0 0 5px 20px; line-height: 28px; }
.sep-lbl { margin-left: 30px; }
.lat { letter-spacing: 0; }

.tail { margin-left: auto; width: 33px; height: 36px; margin-bottom: -2px; flex: none; display: flex; align-items: center; justify-content: center; }
.list-right .tail { width: 32px; }
.split { position: relative; }
.split::before {
  content: "";
  position: absolute;
  left: 2px;
  top: 0;
  bottom: 0;
  width: 1px;
  background: #9a9a9a;
}
.tri { width: 0; height: 0; border-left: 8px solid #777; border-top: 7px solid transparent; border-bottom: 7px solid transparent; }
.tri-b { border-left-color: #5b6fa8; }
.ibox {
  width: 31px;
  height: 31px;
  background: #e6eaf2;
  border: 2px solid #bcc3d2;
  border-radius: 3px;
  display: flex;
  align-items: center;
  padding-left: 2px;
  margin-right: 1px;
}
.ibox-s { padding-left: 3px; }
.ibeam { width: 12px; height: 24px; flex: none; }
.mini { width: 0; height: 0; margin-left: 2px; border-top: 5px solid #5b6fa8; border-left: 5px solid transparent; border-right: 5px solid transparent; }

.sb { width: 31px; margin: 0 4px 0 1px; flex: none; display: flex; flex-direction: column; background: #f0f0f0; }
.sb-btn { height: 36px; flex: none; display: flex; align-items: center; justify-content: center; }
.sb-chev { width: 15px; height: 11px; }
.sb-thumb { height: 1146px; flex: none; background: #c8c8c8; }
.sb-track { flex: 1; }

.check-row { display: flex; align-items: center; height: 30px; margin-top: 23px; }
.check { width: 26px; height: 26px; border: 2px solid #444; display: flex; align-items: center; justify-content: center; flex: none; }
.check-mark { width: 18px; height: 16px; }
.check-text { margin: 0 0 3px 14px; white-space: nowrap; }

.btn {
  font: inherit;
  letter-spacing: inherit;
  word-spacing: inherit;
  color: #1c1c1c;
  height: 50px;
  padding: 0 0 4px;
  background: #e1e1e1;
  border: 2px solid #adadad;
  white-space: nowrap;
}
.btn-off { background: #ccc; border-color: #bfbfbf; color: #a3a3a3; }
.btn-mod { width: 145px; margin: 10px 0 0 2px; }

.custom {
  display: grid;
  grid-template-columns: 156px auto;
  row-gap: 14px;
  align-items: center;
  padding-left: 2px;
  margin-top: 13px;
}
.custom-cell { display: flex; align-items: center; gap: 5px; }
.custom-lab { white-space: nowrap; margin-bottom: 5px; }
.drop { height: 46px; display: flex; align-items: center; justify-content: space-between; padding: 0 10px 0 9px; }
.drop-text { margin-bottom: 5px; }
.drop-a { width: 171px; }
.drop-b { width: 279px; }
.caret { width: 0; height: 0; margin-left: 6px; border-top: 8px solid #111; border-left: 6px solid transparent; border-right: 6px solid transparent; }

.move { height: 48px; background: #c9c9c9; border: 2px solid #bebebe; display: flex; align-items: center; justify-content: center; }
.move-up { width: 0; height: 0; border-bottom: 8px solid #b0b0b0; border-left: 8px solid transparent; border-right: 8px solid transparent; }
.move-down { width: 0; height: 0; border-top: 8px solid #b0b0b0; border-left: 8px solid transparent; border-right: 8px solid transparent; }

.foot {
  height: 76px;
  flex: none;
  display: flex;
  justify-content: flex-end;
  gap: 22px;
  padding: 10px 10px 16px 0;
  position: relative;
}
.btn-foot { width: 146px; }
.btn-ok { border: 3px solid #2f74c4; }
.grip {
  position: absolute;
  right: 0;
  bottom: 0;
  width: 16px;
  height: 16px;
  background-image: radial-gradient(#c6c6c6 1.5px, transparent 1.6px);
  background-size: 5px 5px;
}
```
